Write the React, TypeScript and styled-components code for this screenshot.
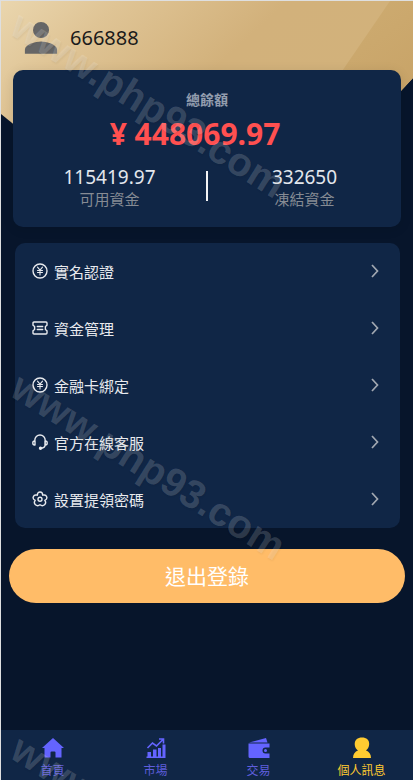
import React from "react";
import styled, { createGlobalStyle } from "styled-components";

const GlobalStyle = createGlobalStyle`
  * { box-sizing: border-box; }
  body {
    margin: 0;
    background: #07152b;
    font-family: "Noto Sans", "Noto Sans CJK TC", sans-serif;
  }
  button { font-family: inherit; cursor: pointer; }
`;

const Page = styled.div`
  position: relative;
  display: flex;
  flex-direction: column;
  min-height: 100vh;
  overflow: hidden;
  border-top: 1px solid #dedfe0;
  border-left: 1px solid #dedfe0;
  background: #07152b;
`;

const Backdrop = styled.svg`
  position: absolute;
  top: 0;
  left: 0;
  width: 100%;
  height: 160px;
`;

const Header = styled.header`
  position: relative;
  display: flex;
  align-items: center;
  gap: 8px;
  height: 69px;
  padding: 4px 19px 0;
  color: #1b1b1b;
  font-size: 20px;
`;

const Balance = styled.section`
  position: relative;
  margin: 0 12px;
  padding: 20px 0 17px;
  border-radius: 10px;
  background: #102646;
  box-shadow: 0 2px 12px rgba(0, 0, 0, 0.1);
  text-align: center;
`;

const BalanceTitle = styled.h2`
  margin: 0;
  color: #939dae;
  font-size: 14px;
  line-height: 20px;
  font-weight: 700;
`;

const Total = styled.div`
  padding-right: 24px;
  color: #ff5050;
  font-size: 30px;
  line-height: 48px;
  font-weight: 700;
`;

const Funds = styled.div`
  display: flex;
  align-items: center;
  margin-top: 8px;
`;

const Fund = styled.div`
  flex: 1;
  color: #e3e7ed;
  font-size: 19px;
  line-height: 22px;
`;

const FundLabel = styled.div`
  color: #868b94;
  font-size: 15px;
`;

const Divider = styled.div`
  width: 2px;
  height: 30px;
  margin-bottom: 4px;
  background: #f2f3f5;
`;

const Menu = styled.nav`
  margin: 16px 13px 0 14px;
  border-radius: 10px;
  background: #102646;
`;

const MenuItem = styled.button`
  display: flex;
  align-items: center;
  width: 100%;
  height: 57px;
  padding: 0 17px 1px;
  border: 0;
  background: transparent;
  color: #e8eaee;
  font-size: 15px;
  text-align: left;
`;

const MenuLabel = styled.span`
  flex: 1;
  margin-left: 6px;
`;

const Icon = styled.svg`
  display: block;
  flex: none;
  fill: none;
  stroke: currentColor;
  stroke-width: 1.4;
  stroke-linecap: round;
  stroke-linejoin: round;
`;

const Arrow = styled(Icon)`
  color: #a2a8b1;
  stroke-width: 1.7;
  stroke-linecap: butt;
  stroke-linejoin: miter;
`;

const Logout = styled.button`
  margin: 21px 8px 20px;
  height: 54px;
  padding: 0 0 2px;
  border: 0;
  border-radius: 27px;
  background: #ffbc68;
  color: #fff;
  font-size: 21px;
`;

const TabBar = styled.nav`
  display: flex;
  height: 50px;
  margin-top: auto;
  background: #102646;
`;

const Tab = styled.button<{ $active?: boolean }>`
  display: flex;
  flex: 1;
  flex-direction: column;
  align-items: center;
  gap: 4px;
  padding: 7px 0 0;
  border: 0;
  background: transparent;
  color: ${(p) => (p.$active ? "#ffcb31" : "#6464ff")};
  font-size: 12px;
  line-height: 16px;
`;

const TabLabel = styled.span<{ $active?: boolean }>`
  color: ${(p) => (p.$active ? "#ffcb31" : "#5e5edc")};
`;

const Glyph = styled.svg`
  display: block;
  flex: none;
  fill: currentColor;
`;

const Watermark = styled.div<{ $row: number }>`
  position: absolute;
  top: ${(p) => 3 + p.$row * 362}px;
  left: 25px;
  transform: rotate(32deg);
  transform-origin: 0 0;
  color: rgba(255, 255, 255, 0.17);
  text-shadow: 1px 1px 2px rgba(0, 0, 0, 0.05);
  font: 700 40px/40px "Liberation Sans", sans-serif;
  white-space: nowrap;
  pointer-events: none;
`;

const YenIcon = () => (
  <Icon width="16" height="16" viewBox="0 0 16 16" aria-hidden="true">
    <circle cx="8" cy="8" r="7" />
    <path d="M5.5 4.200 8 7.200l2.500-3M8 7.200v4.800M5.500 7.500h5M5.500 9.500h5" strokeWidth="1.100" />
  </Icon>
);

const TicketIcon = () => (
  <Icon width="16" height="16" viewBox="0 0 16 16" aria-hidden="true">
    <path d="M2 2h12q1 0 1 1v2.200l-1.600 1.300v3L15 10.800V13q0 1-1 1H2q-1 0-1-1v-2.200l1.600-1.300v-3L1 5.200V3q0-1 1-1ZM5.300 6.500h5.400M5.300 9.500h5.400" />
  </Icon>
);

const ServiceIcon = () => (
  <Icon width="16" height="16" viewBox="0 0 16 16" aria-hidden="true">
    <path d="M2.800 7V6.200a5.200 5.200 0 0 1 10.400 0V10.500q0 3-3.400 3.700M3 7H2.500Q.800 7 .800 9t1.700 2H3ZM13 7h.500q1.700 0 1.700 2t-1.700 2H13Z" />
    <circle cx="8.500" cy="14.300" r="1" fill="currentColor" />
  </Icon>
);

const FlowerIcon = () => (
  <Icon width="16" height="16" viewBox="0 0 16 16" aria-hidden="true">
    <path d="M5.300 4.200C5.300 0 10.700 0 10.700 4.200C14.800 2.900 16.500 7.600 12.800 9.400C15.300 12.800 11.200 16.100 8 13.800C4.800 16.100.700 12.800 3.200 9.400C-.500 7.600 1.200 2.900 5.300 4.200Z" />
    <circle cx="8" cy="8.300" r="2" />
  </Icon>
);

const menuItems = [
  { label: "實名認證", icon: <YenIcon /> },
  { label: "資金管理", icon: <TicketIcon /> },
  { label: "金融卡綁定", icon: <YenIcon /> },
  { label: "官方在線客服", icon: <ServiceIcon /> },
  { label: "設置提領密碼", icon: <FlowerIcon /> },
];

const tabs = [
  { label: "首頁", icon: <path d="M11 1 22 11h-2.500v9.500h-6v-5q0-1-1-1h-3q-1 0-1 1v5h-6V11H0Z" /> },
  {
    label: "市場",
    icon: (
      <>
        <path d="M2.500 15H6v5H2.500ZM8 12.500h3.500V20H8ZM13 11h3v9h-3ZM17.500 7.500h3V20h-3ZM1.500 19.500h19V21h-19Z" />
        <path d="m2.500 11 5-5 4 3L18 2.500M14 2h4.500v4.500" fill="none" stroke="currentColor" strokeWidth="1.600" />
      </>
    ),
  },
  {
    label: "交易",
    icon: (
      <>
        <path d="M1 5.500 18 1l1.500 4.500ZM.500 6.500h21v4h-4a3 3 0 0 0 0 6h4V21H2q-1.500 0-1.500-1.500Z" />
        <circle cx="17.500" cy="13.500" r="1.500" />
      </>
    ),
  },
  {
    label: "個人訊息",
    active: true,
    icon: <path d="M11 .500c9.300 0 8.500 10 4 13 3 1 5 3.500 5 7.500H2c0-4 2-6.500 5-7.500-4.500-3-5.300-13 4-13Z" />,
  },
];

export default function App() {
  return (
    <Page>
      <GlobalStyle />
      <Backdrop viewBox="0 0 412 160" preserveAspectRatio="none" aria-hidden="true">
        <defs>
          <linearGradient id="gold" x1="0" y1="0" x2="1" y2="0.4">
            <stop offset="0" stopColor="#ead6ae" />
            <stop offset="0.250" stopColor="#dfc495" />
            <stop offset="0.600" stopColor="#d2b17b" />
            <stop offset="1" stopColor="#d2b27b" />
          </linearGradient>
          <linearGradient id="fold" x1="0" y1="0" x2="0.600" y2="1">
            <stop offset="0" stopColor="#cfae74" />
            <stop offset="1" stopColor="#c7a266" />
          </linearGradient>
        </defs>
        <path d="M0 0H412V77L342 152H48L0 113Z" fill="url(#gold)" />
        <path d="M389 0H412V77L342 152H285Z" fill="url(#fold)" />
      </Backdrop>
      <Header>
        <Glyph width="42" height="42" viewBox="0 0 24 24" color="#666" aria-hidden="true">
          <path d="M12 12a4.600 4.600 0 1 0 0-9.200 4.600 4.600 0 0 0 0 9.200ZM2.800 21v-2.300c0-3.100 6.100-4.700 9.200-4.700s9.200 1.600 9.200 4.700V21Z" />
        </Glyph>
        <span>666888</span>
      </Header>
      <Balance>
        <BalanceTitle>總餘額</BalanceTitle>
        <Total>¥ 448069.97</Total>
        <Funds>
          <Fund>
            115419.97
            <FundLabel>可用資金</FundLabel>
          </Fund>
          <Divider />
          <Fund>
            332650
            <FundLabel>凍結資金</FundLabel>
          </Fund>
        </Funds>
      </Balance>
      <Menu aria-label="帳戶">
        {menuItems.map((item) => (
          <MenuItem key={item.label} type="button">
            {item.icon}
            <MenuLabel>{item.label}</MenuLabel>
            <Arrow width="16" height="16" viewBox="0 0 16 16" aria-hidden="true">
              <path d="m5 2 5.500 6L5 14" />
            </Arrow>
          </MenuItem>
        ))}
      </Menu>
      <Logout type="button">退出登錄</Logout>
      <TabBar>
        {tabs.map((tab) => (
          <Tab key={tab.label} type="button" $active={tab.active} aria-current={tab.active ? "page" : undefined}>
            <Glyph width="22" height="22" viewBox="0 0 22 22" aria-hidden="true">{tab.icon}</Glyph>
            <TabLabel $active={tab.active}>{tab.label}</TabLabel>
          </Tab>
        ))}
      </TabBar>
      {[0, 1, 2].map((row) => (
        <Watermark key={row} $row={row} aria-hidden="true">www.php93.com</Watermark>
      ))}
    </Page>
  );
}
